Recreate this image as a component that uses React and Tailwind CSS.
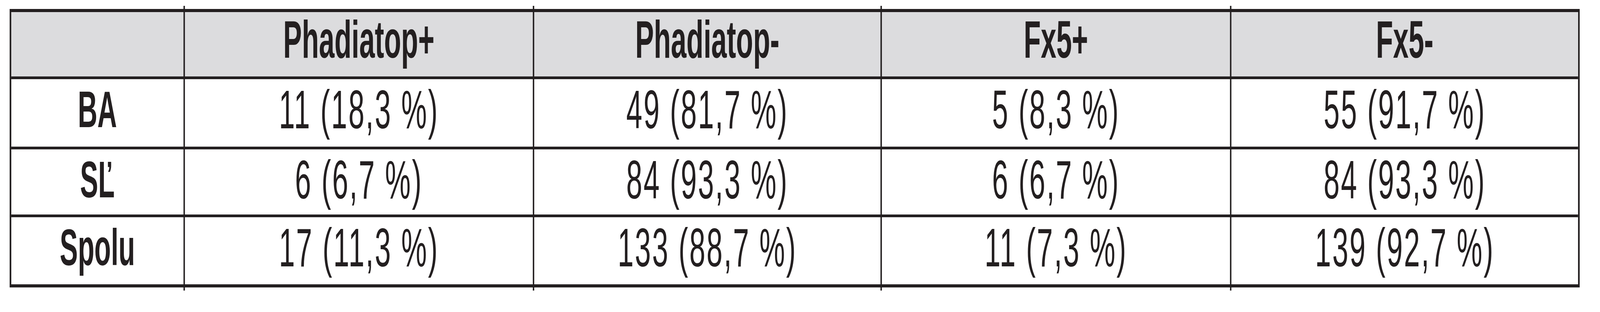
import React from 'react'

const headers = ['Phadiatop+', 'Phadiatop-', 'Fx5+', 'Fx5-']

const rows = [
  { label: 'BA', cells: ['11 (18,3 %)', '49 (81,7 %)', '5 (8,3 %)', '55 (91,7 %)'], h: 'h-[180px]' },
  { label: 'SĽ', cells: ['6 (6,7 %)', '84 (93,3 %)', '6 (6,7 %)', '84 (93,3 %)'], h: 'h-[174px]' },
  { label: 'Spolu', cells: ['17 (11,3 %)', '133 (88,7 %)', '11 (7,3 %)', '139 (92,7 %)'], h: 'h-[179px]' },
]

const cols = 'grid grid-cols-[839px_1702px_1694px_1703px_1696px]'

// the inner column rules poke out a little above and below the frame
const Stub = () => (
  <div className={`${cols} h-2 px-2`}>
    <div />
    <div className="border-l-[7px] border-[#231f20]" />
    <div className="border-l-[7px] border-[#231f20]" />
    <div className="border-l-[7px] border-[#231f20]" />
    <div className="border-l-[7px] border-[#231f20]" />
  </div>
)

const App = () => {
  // the browser window may be narrower than the 7796px sheet: squeeze it to fit
  const vw = typeof window !== 'undefined' ? window.innerWidth : 7796
  const k = Math.min(1, vw / 7796)

  return (
    <div className="w-screen h-[800px] overflow-hidden bg-white">
      <div
        className="w-[7796px] h-[800px] bg-white pt-[15px] pl-[47px] text-[#231f20] origin-top-left"
        style={{ fontFamily: '"Liberation Sans", Arial, sans-serif', transform: `scaleX(${k})` }}
      >
        <div className="w-[7650px]">
          <Stub />
          <div className="border-[8px] border-[#231f20]">
            {/* header */}
            <div className={`${cols} h-[165px] bg-[#dcdcde]`}>
              <div />
              {headers.map((h) => (
                <div
                  key={h}
                  className="border-l-[7px] border-[#231f20] text-center font-bold text-[136px] leading-[140px] whitespace-nowrap"
                >
                  {h}
                </div>
              ))}
            </div>

            {rows.map((r) => (
              <div key={r.label} className={`${cols} ${r.h} border-t-[7px] border-[#231f20]`}>
                <div className="pt-2 text-center font-bold text-[132px] leading-[140px] whitespace-nowrap">
                  {r.label}
                </div>
                {r.cells.map((c, i) => (
                  <div
                    key={i}
                    className="border-l-[7px] border-[#231f20] pt-2 text-center text-[140px] leading-[140px] tracking-[6px] whitespace-nowrap"
                  >
                    {c}
                  </div>
                ))}
              </div>
            ))}
          </div>
          <Stub />
        </div>
      </div>
    </div>
  )
}

export default App
